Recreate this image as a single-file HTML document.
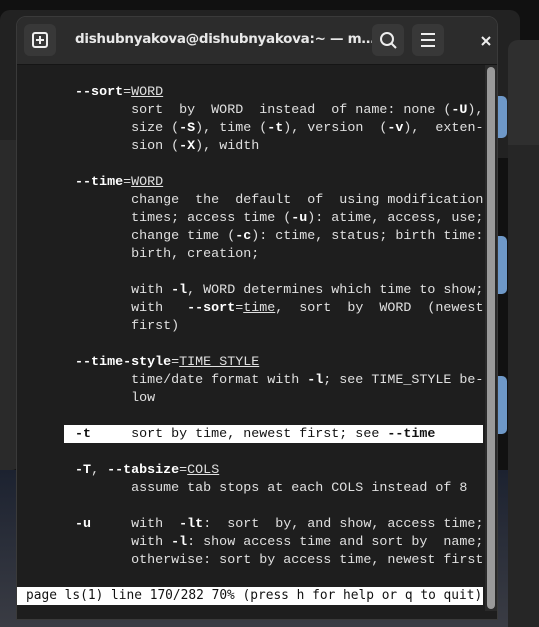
<!DOCTYPE html>
<html><head><meta charset="utf-8"><style>
html,body{margin:0;width:539px;height:627px;overflow:hidden}
body{background:#111;position:relative;font-family:"DejaVu Sans Mono","Liberation Mono",monospace}
.bgwin{position:absolute;left:0;top:10px;width:520px;height:148px;background:#222;border-radius:10px}
.lw{position:absolute;left:0;top:140px;width:20px;height:330px;background:#2a2a2a;border-radius:0 0 8px 0}
.rw{position:absolute;left:508px;top:40px;width:40px;height:600px;background:#262626;border-radius:10px 0 0 0}
.rwh{position:absolute;left:508px;top:40px;width:40px;height:105px;background:#2f2f2f;border-radius:10px 0 0 0}
.blue{position:absolute;left:497px;width:10px;background:#6e98c8;border-radius:0 5px 5px 0}
.sky{position:absolute;left:0;top:470px;width:508px;height:157px;background:linear-gradient(#1c2230,#3a3c44)}
.win{position:absolute;left:16px;top:16px;width:482px;height:604px;background:#1e1e1e;border-radius:10px 10px 0 0;border:1px solid #3a3a3a;box-sizing:border-box;overflow:hidden}
.tb{position:absolute;left:0;top:0;width:100%;height:47px;background:#2c2c2c;border-bottom:1px solid #151515}
.btn{position:absolute;top:7px;width:32px;height:32px;background:#383838;border-radius:6px}
.title{position:absolute;left:58px;top:14px;color:#e8e8e8;font:bold 13.5px "DejaVu Sans","Liberation Sans",sans-serif;white-space:nowrap;letter-spacing:-0.3px}
pre{margin:0;position:absolute;left:10px;top:67px;color:#e0e0e0;font-size:13.35px;line-height:18px}
b{font-weight:bold;color:#fff}
u{text-decoration:underline}
.hl{position:absolute;left:47px;top:408px;width:419px;height:18px;background:#fff}
.st{position:absolute;left:0;top:570px;width:466px;height:18px;background:#fff}
.sb{position:absolute;left:470px;top:50px;width:8px;height:542px;background:#9a9a9a;border-radius:4px}
.sbt{position:absolute;left:468px;top:48px;width:12px;height:546px;background:#2a2a2a}
.stt{position:absolute;left:9px;top:570px;font-size:12.85px;line-height:18px;color:#111;white-space:pre}
</style></head><body>
<div class="bgwin"></div><div class="lw"></div><div class="sky"></div>
<div class="rw"></div><div class="rwh"></div>
<div class="blue" style="top:96px;height:42px"></div>
<div class="blue" style="top:236px;height:58px"></div>
<div class="blue" style="top:376px;height:58px"></div>
<div class="win">
 <div class="tb">
  <div class="btn" style="left:7px"><svg width="32" height="32"><rect x="9" y="9" width="14" height="14" rx="2" fill="none" stroke="#eee" stroke-width="2"/><path d="M16 12v8M12 16h8" stroke="#eee" stroke-width="2"/></svg></div>
  <div class="title">dishubnyakova@dishubnyakova:~ — m…</div>
  <div class="btn" style="left:355px"><svg width="32" height="32"><circle cx="15" cy="15" r="6" fill="none" stroke="#eee" stroke-width="2"/><path d="M19.5 19.5l4.5 4.5" stroke="#eee" stroke-width="2"/></svg></div>
  <div class="btn" style="left:395px"><svg width="32" height="32"><path d="M9 10h14M9 16h14M9 22h14" stroke="#eee" stroke-width="2"/></svg></div>
  <svg style="position:absolute;left:464px;top:19px" width="10" height="10"><path d="M1 1l8 8M9 1l-8 8" stroke="#eee" stroke-width="2"/></svg>
 </div>
 <div class="sbt"></div><div class="sb"></div>
 <div class="hl"></div><div class="st"></div>
<pre>      <b>--sort</b>=<u>WORD</u>
             sort  by  WORD  instead  of name: none (<b>-U</b>),
             size (<b>-S</b>), time (<b>-t</b>), version  (<b>-v</b>),  exten‐
             sion (<b>-X</b>), width

      <b>--time</b>=<u>WORD</u>
             change  the  default  of  using modification
             times; access time (<b>-u</b>): atime, access, use;
             change time (<b>-c</b>): ctime, status; birth time:
             birth, creation;

             with <b>-l</b>, WORD determines which time to show;
             with   <b>--sort</b>=<u>time</u>,  sort  by  WORD  (newest
             first)

      <b>--time-style</b>=<u>TIME_STYLE</u>
             time/date format with <b>-l</b>; see TIME_STYLE be‐
             low

<span style="color:#111">      <b style="color:#111">-t</b>     sort by time, newest first; see <b style="color:#111">--time</b></span>

      <b>-T</b>, <b>--tabsize</b>=<u>COLS</u>
             assume tab stops at each COLS instead of 8

      <b>-u</b>     with  <b>-lt</b>:  sort  by, and show, access time;
             with <b>-l</b>: show access time and sort by  name;
             otherwise: sort by access time, newest first
</pre>
 <div class="stt">page ls(1) line 170/282 70% (press h for help or q to quit)</div>
</div>
</body></html>
